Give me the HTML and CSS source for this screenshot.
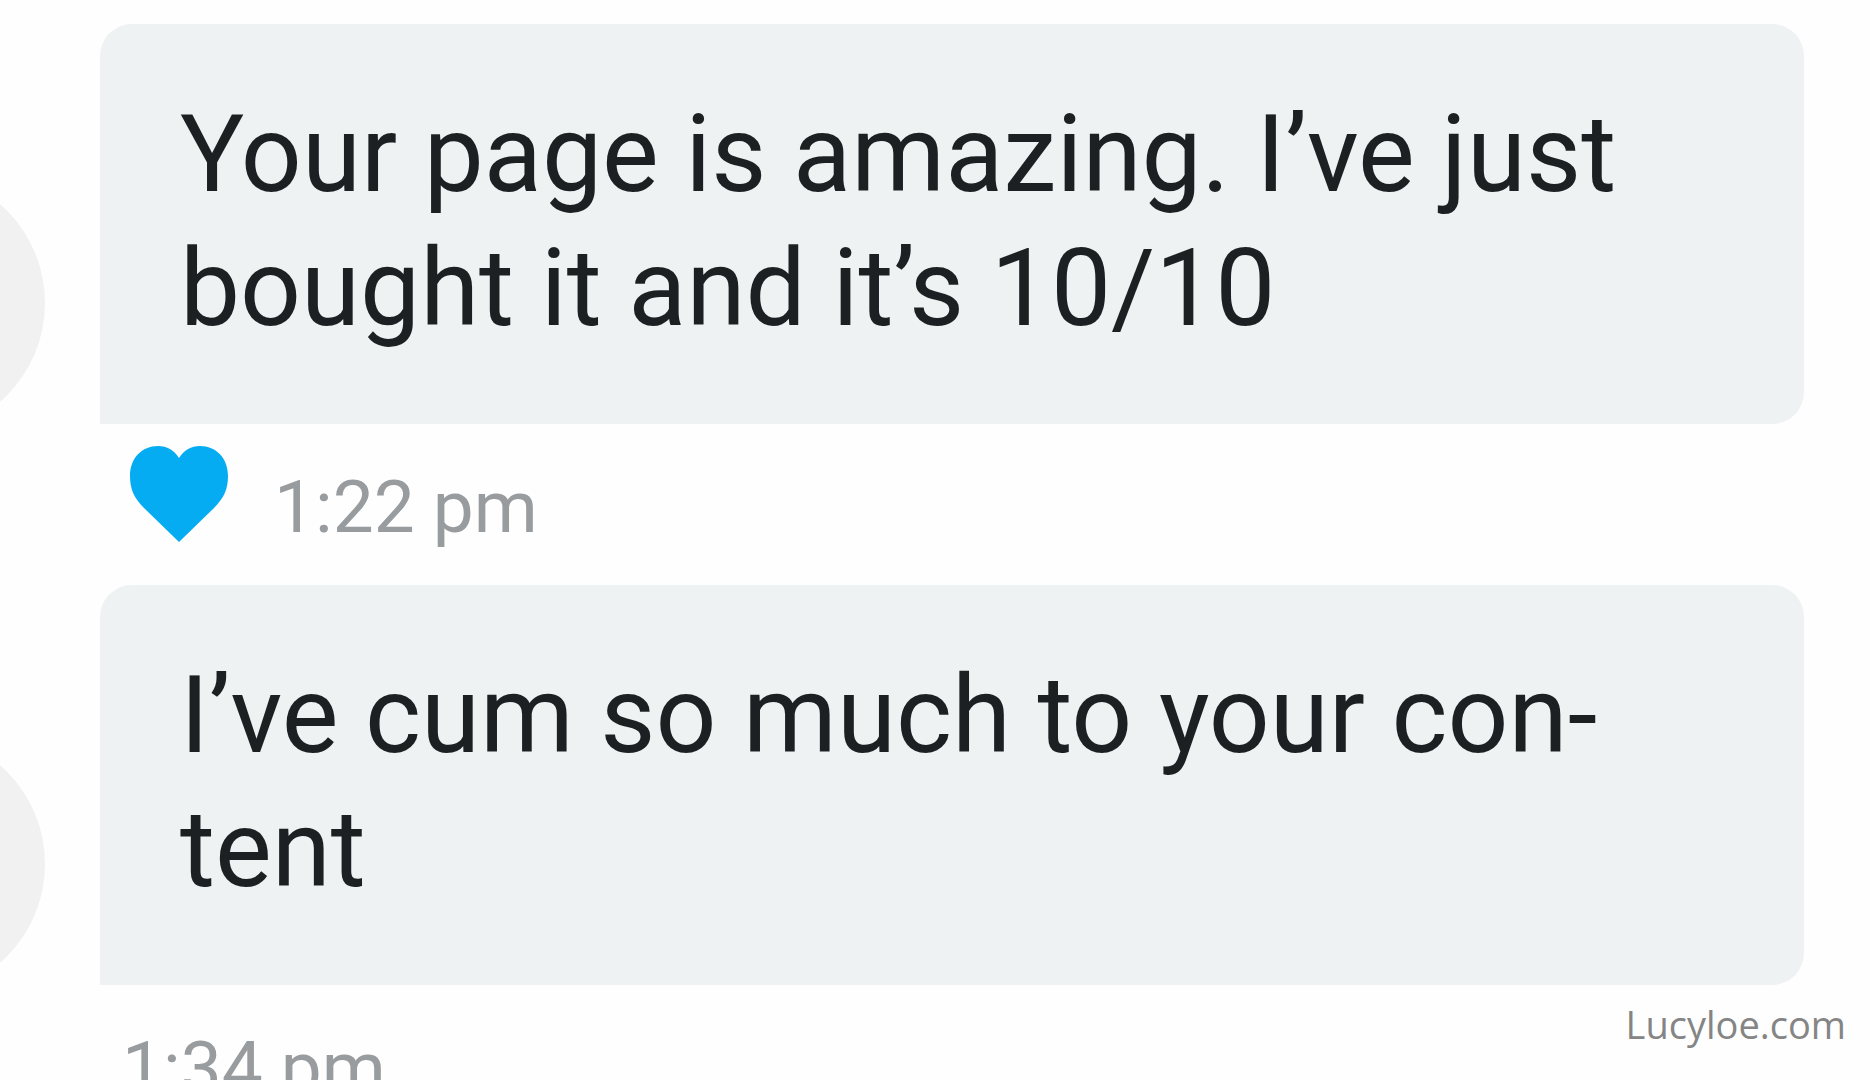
FILE: index.html
```html
<!DOCTYPE html>
<html lang="en">
<head>
    <meta charset="UTF-8">
    <meta name="viewport" content="width=device-width, initial-scale=1.0">
    <title>Messages</title>
    <link rel="stylesheet" href="styles.css">
</head>
<body>
    <main class="chat">
        <article class="message">
            <div class="row">
                <div class="avatar"></div>
                <p class="bubble">Your page is amazing. I’ve just<br>bought it and it’s 10/10</p>
            </div>
            <div class="meta liked">
                <svg class="heart" viewBox="0 0 98 96" role="img" aria-label="Liked">
                    <path d="M49 96 L14 62 C4 52 0 43 0 30 C0 12 12 0 28 0 C37 0 44 4 49 12 C54 4 61 0 70 0 C86 0 98 12 98 30 C98 43 94 52 84 62 Z"/>
                </svg>
                <time datetime="13:22">1:22 pm</time>
            </div>
        </article>

        <article class="message">
            <div class="row">
                <div class="avatar"></div>
                <p class="bubble">I’ve cum so much to your con-<br>tent</p>
            </div>
            <div class="meta">
                <time datetime="13:34">1:34 pm</time>
            </div>
        </article>
    </main>

    <div class="watermark">Lucyloe.com</div>
</body>
</html>
```

FILE: styles.css
```css
* {
    box-sizing: border-box;
    margin: 0;
    padding: 0;
}

body {
    height: 100vh;
    overflow: hidden;
    font-family: Roboto, sans-serif;
    background-color: #fefefe;
    color: #1c2022;
}

.chat {
    padding: 24px 66px 0 0;
}

.row {
    display: flex;
    align-items: flex-end;
    gap: 55px;
}

/* only the right edge of the avatar shows */
.avatar {
    flex: none;
    width: 262px;
    height: 262px;
    margin: 0 0 -10px -217px;
    border-radius: 50%;
    background-color: #f1f1f2;
}

.bubble {
    flex: 1;
    padding: 64px 80px 68px;
    border-radius: 32px 32px 32px 0;
    background-color: #eef2f3;
    font-size: 107px;
    line-height: 134px;
}

.meta {
    display: flex;
    align-items: center;
    height: 161px;
    padding-left: 122px;
    color: #999c9f;
    font-size: 73px;
    line-height: 84px;
}

.liked {
    gap: 46px;
    padding-left: 130px;
}

.meta time {
    padding-top: 4px;
}

.heart {
    width: 98px;
    height: 96px;
    margin-bottom: 22px;
    fill: #06acf2;
}

.watermark {
    position: absolute;
    right: 24px;
    bottom: 30px;
    color: #858585;
    font-family: "Open Sans", sans-serif;
    font-size: 38px;
    line-height: 52px;
}
```
